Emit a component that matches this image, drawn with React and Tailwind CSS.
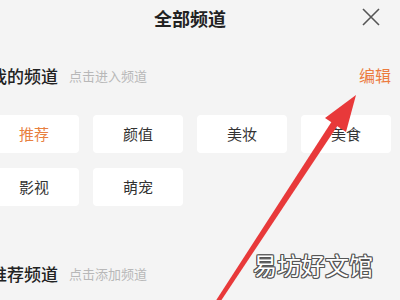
import React from "react";

const font = { fontFamily: '"Noto Sans CJK SC", "Noto Sans", sans-serif' };

function Chip({ label, active }) {
  return (
    <div
      className={`h-[38px] rounded-[4px] bg-white flex items-center justify-center text-[15px] ${
        active ? "text-[#e8803f]" : "text-[#333333]"
      }`}
    >
      {label}
    </div>
  );
}

function SectionHeader({ title, hint, action }) {
  return (
    <div className="flex items-center h-[20px]">
      <span className="text-[17px] font-medium text-[#222222] leading-none">{title}</span>
      <span className="ml-[11px] text-[13px] text-[#b8b8b8] leading-none">{hint}</span>
      <div className="flex-1" />
      {action && <span className="text-[16px] text-[#ec7b3e] leading-none">{action}</span>}
    </div>
  );
}

export default function App() {
  return (
    <div
      className="relative w-[400px] h-[300px] overflow-hidden bg-[#f4f4f4]"
      style={font}
    >
      <div className="ml-[-11px] w-[402px]">
        <div className="relative h-[36px] flex items-center justify-center">
          <span className="text-[18px] font-bold text-[#222222] leading-none">全部频道</span>
          <svg
            className="absolute right-[11px] top-[8px]"
            width="18"
            height="18"
            viewBox="0 0 18 18"
          >
            <path d="M1 1 L17 17 M17 1 L1 17" stroke="#555555" strokeWidth="1.6" fill="none" />
          </svg>
        </div>
        <div className="mt-[29px] pl-[1px]">
          <SectionHeader title="我的频道" hint="点击进入频道" action="编辑" />
        </div>
        <div className="mt-[30px] grid grid-cols-4 gap-x-[14px] gap-y-[15px]">
          <Chip label="推荐" active />
          <Chip label="颜值" />
          <Chip label="美妆" />
          <Chip label="美食" />
          <Chip label="影视" />
          <Chip label="萌宠" />
        </div>
        <div className="mt-[57px] pl-[1px]">
          <SectionHeader title="推荐频道" hint="点击添加频道" />
        </div>
      </div>

      <svg className="absolute left-0 top-0" width="400" height="300" viewBox="0 0 400 300">
        <polygon points="215,302 219.5,303 340,122 334,118" fill="#e8393a" />
        <polygon points="356,95 346,132 325,118" fill="#e8393a" />
      </svg>

      <div
        className="absolute left-[253px] top-[253px] text-[24px] leading-none text-white tracking-[0px] [text-shadow:1px_0_#555,-1px_0_#555,0_1px_#555,0_-1px_#555,1px_1px_#555,-1px_-1px_#555,1px_-1px_#555,-1px_1px_#555]"
      >
        易坊好文馆
      </div>
    </div>
  );
}
